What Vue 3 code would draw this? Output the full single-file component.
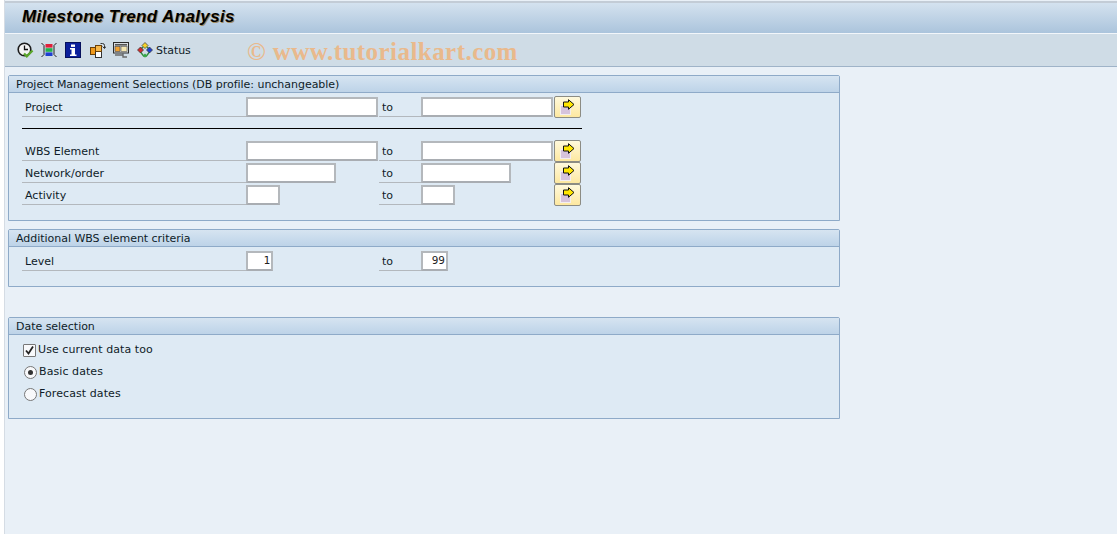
<script setup>
const tools1 = [
  { label: 'Project', to: 132, from: 132 }
]
const tools2 = [
  { label: 'WBS Element', from: 132, to: 132 },
  { label: 'Network/order', from: 90, to: 90 },
  { label: 'Activity', from: 34, to: 34 }
]
</script>

<template>
  <div class="page">
    <div class="strip"></div>
    <div class="main">
      <header class="title-bar">
        <h1>Milestone Trend Analysis</h1>
      </header>
      <div class="toolbar">
        <svg class="ico" width="17" height="16" viewBox="0 0 17 16">
          <circle cx="7.500" cy="7.500" r="6.300" fill="#f4f4f4" stroke="#1c1c1c" stroke-width="1.600"/>
          <path d="M7.500 3.500v4h3.500" fill="none" stroke="#111" stroke-width="1.300"/>
          <path d="M7 11.500l2.800 2.800L15.500 8.500" fill="none" stroke="#5aa52a" stroke-width="2.400"/>
        </svg>
        <svg class="ico i2" width="16" height="16" viewBox="0 0 16 16">
          <path d="M0.500 1l2.500 2.500v9L0.500 15M15.500 1L13 3.500v9l2.500 2.500" fill="none" stroke="#222" stroke-width="1"/>
          <rect x="4.500" y="2" width="7" height="3.600" fill="#e0203a"/>
          <rect x="4.500" y="6.200" width="7" height="3.600" fill="#22b14c"/>
          <rect x="4.500" y="10.400" width="7" height="3.600" fill="#1e3fd0"/>
        </svg>
        <svg class="ico i3" width="16" height="16" viewBox="0 0 16 16">
          <rect x="0.500" y="0.500" width="15" height="15" fill="#0b1f9c" stroke="#06105c"/>
          <rect x="6" y="2.500" width="4" height="2.400" fill="#fff"/>
          <path d="M5 6h5v6.500h1.500V14h-6.500v-1.500h1.500V7.500H5z" fill="#fff"/>
        </svg>
        <svg class="ico i4" width="16" height="16" viewBox="0 0 16 16">
          <rect x="0.500" y="5.500" width="7" height="7" fill="#f09a1c" stroke="#6a4008" stroke-width="1"/>
          <rect x="5.500" y="9.500" width="6" height="6" fill="#fff" stroke="#333" stroke-width="1"/>
          <rect x="5.500" y="3.500" width="6" height="6" fill="#f7b84a" stroke="#6a4008" stroke-width="1"/>
          <path d="M10.500 1.500h2a2 2 0 0 1 2 2v2.500M12.500 4.500l2 2 1.500-2" fill="none" stroke="#333" stroke-width="1"/>
        </svg>
        <svg class="ico i5" width="17" height="16" viewBox="0 0 17 16">
          <rect x="0.500" y="0.500" width="15" height="10.500" fill="#d8dde2" stroke="#2a2a2a"/>
          <rect x="2" y="2" width="12" height="1.600" fill="#555"/>
          <rect x="2" y="4.500" width="5" height="5" fill="#f0a030" stroke="#444" stroke-width="0.600"/>
          <rect x="8" y="4.500" width="6" height="5" fill="#f4e6b0" stroke="#555" stroke-width="0.600"/>
          <path d="M2 13h8M10 11v4h4" fill="none" stroke="#6a6a6a" stroke-width="1.400"/>
        </svg>
        <svg class="ico i6" width="16" height="16" viewBox="0 0 16 16">
          <path d="M3.500 10l3.500 4.500M12.500 10L9 14.500M6 5L4 7M10 5l2 2" fill="none" stroke="#2e8b3a" stroke-width="1.300"/>
          <path d="M8 0.500L11 3.500 8 6.500 5 3.500z" fill="#f5d328" stroke="#333" stroke-width="0.700"/>
          <path d="M3.500 5L6.500 8 3.500 11 0.500 8z" fill="#d42a2a" stroke="#333" stroke-width="0.700"/>
          <path d="M12.500 5L15.500 8 12.500 11 9.500 8z" fill="#1e3fd0" stroke="#333" stroke-width="0.700"/>
          <path d="M8 11.500l2 2-2 2.300-2-2.300z" fill="#35a845"/>
        </svg>
        <span class="status">Status</span>
        <span class="watermark">© www.tutorialkart.com</span>
      </div>

      <div class="content">
        <section class="panel p1">
          <div class="panel-head">Project Management Selections (DB profile: unchangeable)</div>
          <div class="panel-body">
            <div class="rows">
              <div v-for="r in tools1" :key="r.label" class="row">
                <span class="label">{{ r.label }}</span>
                <span class="from-slot"><span class="field" :style="{ width: r.from + 'px' }"></span></span>
                <span class="to-slot"><span class="to">to</span></span>
                <span class="field-wrap"><span class="field" :style="{ width: r.to + 'px' }"></span></span>
                <button class="arrow">
                  <svg width="15" height="16" viewBox="0 0 15 16">
                    <rect x="0.500" y="6.500" width="10" height="9" fill="#d6c3dc" stroke="#f3eef0" stroke-width="1"/>
                    <path d="M3.500 3h5V0.700L14 5.500 8.500 10.300V8h-5z" fill="#ffe600" stroke="#111" stroke-width="1"/>
                  </svg>
                </button>
              </div>
            </div>
            <div class="rule"></div>
            <div class="rows">
              <div v-for="r in tools2" :key="r.label" class="row">
                <span class="label">{{ r.label }}</span>
                <span class="from-slot"><span class="field" :style="{ width: r.from + 'px' }"></span></span>
                <span class="to-slot"><span class="to">to</span></span>
                <span class="field-wrap"><span class="field" :style="{ width: r.to + 'px' }"></span></span>
                <button class="arrow">
                  <svg width="15" height="16" viewBox="0 0 15 16">
                    <rect x="0.500" y="6.500" width="10" height="9" fill="#d6c3dc" stroke="#f3eef0" stroke-width="1"/>
                    <path d="M3.500 3h5V0.700L14 5.500 8.500 10.300V8h-5z" fill="#ffe600" stroke="#111" stroke-width="1"/>
                  </svg>
                </button>
              </div>
            </div>
          </div>
        </section>

        <section class="panel p2">
          <div class="panel-head">Additional WBS element criteria</div>
          <div class="panel-body">
            <div class="row">
              <span class="label">Level</span>
              <span class="from-slot"><span class="field num" style="width: 27px">1</span></span>
              <span class="to-slot"><span class="to">to</span></span>
              <span class="field-wrap"><span class="field num" style="width: 27px">99</span></span>
            </div>
          </div>
        </section>

        <section class="panel p3">
          <div class="panel-head">Date selection</div>
          <div class="panel-body opts">
            <div class="opt">
              <span class="check">
                <svg width="11" height="11" viewBox="0 0 11 11"><path d="M2 5.500l2.500 3L9 1.500" fill="none" stroke="#222" stroke-width="1.800"/></svg>
              </span>
              <span class="opt-text">Use current data too</span>
            </div>
            <div class="opt">
              <span class="radio on"></span>
              <span class="opt-text">Basic dates</span>
            </div>
            <div class="opt">
              <span class="radio"></span>
              <span class="opt-text">Forecast dates</span>
            </div>
          </div>
        </section>
      </div>
    </div>
  </div>
</template>

<style>
html, body { margin: 0; background: #fff; }
</style>

<style scoped>
.page {
  display: flex;
  width: 1117px;
  height: 534px;
  overflow: hidden;
  font-family: "DejaVu Sans", sans-serif;
  font-size: 11px;
  color: #0f1c28;
}
.strip {
  width: 4px;
  flex: none;
  background: #fff;
  border-right: 1px solid #d5dce4;
}
.main {
  flex: 1;
  display: flex;
  flex-direction: column;
  background: #e9f0f7;
  min-width: 0;
}
.title-bar {
  height: 28px;
  margin-top: 1px;
  border-top: 2px solid #c3ccd6;
  border-bottom: 1px solid #f2f6fa;
  background: linear-gradient(#d4e2ef, #abc4dc);
  display: flex;
  align-items: center;
  padding: 0 0 2px 17px;
}
.title-bar h1 {
  margin: 0;
  font-family: "Liberation Sans", Arial, sans-serif;
  font-size: 17px;
  font-weight: bold;
  font-style: italic;
  letter-spacing: 0.37px;
  color: #000;
  text-shadow: 1px 1px 0 #a08a60;
}
.toolbar {
  height: 32px;
  border-bottom: 1px solid #9fb3c8;
  background: #cfdce6;
  display: flex;
  align-items: center;
  padding-left: 12px;
  position: relative;
}
.ico { flex: none; }
.i2 { margin-left: 7px; }
.i3 { margin-left: 8px; }
.i4 { margin-left: 9px; }
.i5 { margin-left: 7px; }
.i6 { margin-left: 7px; }
.status { margin-left: 3px; letter-spacing: -0.05px; }
.watermark {
  position: absolute;
  left: 242px;
  top: 4px;
  font-family: "Liberation Serif", serif;
  font-weight: bold;
  font-size: 25px;
  letter-spacing: 0.45px;
  color: #e9b98c;
  white-space: nowrap;
}
.content {
  flex: 1;
  padding: 8px 0 0 3px;
}
.panel {
  width: 832px;
  box-sizing: border-box;
  border: 1px solid #8eaac8;
  border-top-right-radius: 2px;
  border-top-left-radius: 2px;
  background: #deeaf4;
}
.p1 { height: 146px; }
.p2 { height: 58px; margin-top: 8px; }
.p3 { height: 102px; margin-top: 30px; }
.panel-head {
  height: 16px;
  line-height: 17px;
  padding-left: 7px;
  background: linear-gradient(#d6e4f1, #bdd3e8);
  border-bottom: 1px solid #8eaac8;
  white-space: nowrap;
  letter-spacing: -0.03px;
}
.panel-body {
  padding: 4px 0 0 13px;
}
.rows {
  display: flex;
  flex-direction: column;
  gap: 2px;
}
.row {
  display: flex;
  align-items: stretch;
  height: 20px;
}
.label {
  width: 224px;
  flex: none;
  box-sizing: border-box;
  padding-left: 3px;
  line-height: 21px;
  border-bottom: 1px solid #b3b8bd;
}
.from-slot {
  width: 132px;
  flex: none;
  display: flex;
}
.field-wrap {
  width: 132px;
  flex: none;
  display: flex;
}
.field {
  box-sizing: border-box;
  height: 20px;
  flex: none;
  display: block;
  background: #fff;
  border: 2px solid #b4b8bc;
  border-bottom-color: #a9adb2;
}
.num {
  text-align: right;
  padding-right: 1px;
  line-height: 16px;
  font-family: "DejaVu Sans Mono", monospace;
  font-size: 11px;
  color: #222;
}
.to-slot {
  width: 43px;
  flex: none;
  display: flex;
  padding-left: 1px;
  box-sizing: border-box;
}
.to {
  flex: 1;
  box-sizing: border-box;
  padding-left: 3px;
  line-height: 21px;
  border-bottom: 1px solid #b3b8bd;
}
.arrow {
  width: 27px;
  height: 22px;
  margin: -1px 0 -1px 1px;
  padding: 0;
  flex: none;
  border: 1px solid #8c8c84;
  border-radius: 2px;
  background: linear-gradient(#fff9dc, #fde8a0);
  display: flex;
  align-items: center;
  justify-content: center;
}
.rule {
  width: 560px;
  height: 1px;
  background: #000;
  margin: 11px 0 12px;
}
.opts {
  padding: 5px 0 0 14px;
  display: flex;
  flex-direction: column;
  gap: 2px;
}
.opt {
  display: flex;
  align-items: center;
  height: 20px;
}
.opt-text {
  padding-bottom: 2px;
  letter-spacing: 0.08px;
}
.check {
  box-sizing: border-box;
  width: 13px;
  height: 13px;
  border: 1px solid #777;
  border-radius: 1px;
  background: #f8f9fb;
  display: flex;
  align-items: center;
  justify-content: center;
  margin-right: 2px;
}
.radio {
  box-sizing: border-box;
  width: 13px;
  height: 13px;
  margin-left: 1px;
  border: 1px solid #777;
  border-radius: 50%;
  background: #f8f9fb;
  margin-right: 2px;
  position: relative;
}
.radio.on::after {
  content: "";
  position: absolute;
  left: 3px;
  top: 3px;
  width: 5px;
  height: 5px;
  border-radius: 50%;
  background: #333;
}
</style>
